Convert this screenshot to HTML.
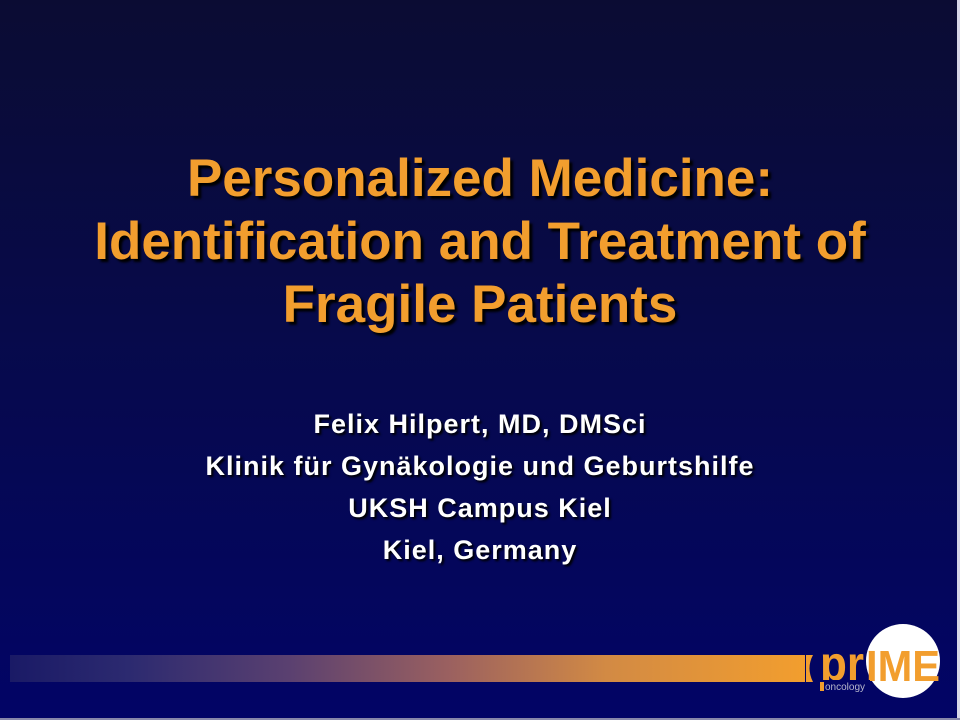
<!DOCTYPE html>
<html><head><meta charset="utf-8"><style>
html,body{margin:0;padding:0}
body{width:960px;height:720px;overflow:hidden;position:relative;background:linear-gradient(180deg,#0b0c33 0%,#070a4a 45%,#020466 100%);font-family:"Liberation Sans",Arial,sans-serif}
.t{position:absolute;left:0;width:960px;text-align:center;font-weight:bold;color:#f29e2e;font-size:53px;line-height:63px;top:147px;text-shadow:3px 3px 2px #000}
.s{position:absolute;left:0;width:960px;text-align:center;font-weight:bold;color:#fff;font-size:27px;letter-spacing:1px;line-height:42px;top:403px;text-shadow:2px 2px 2px #000}
.bar{position:absolute;left:10px;top:655px;width:795px;height:27px;background:linear-gradient(90deg,#1a1a66 0%,#2c2a70 15%,#5a4070 35%,#9a6060 55%,#d28a44 75%,#f29e2e 100%)}
</style></head><body>
<div class="t">Personalized Medicine:<br>Identification and Treatment of<br>Fragile Patients</div>
<div class="s">Felix Hilpert, MD, DMSci<br>Klinik für Gynäkologie und Geburtshilfe<br>UKSH Campus Kiel<br>Kiel, Germany</div>
<div class="bar"></div>
<svg style="position:absolute;left:0;top:0" width="960" height="720">
<path d="M806 655 L813 655 Q806 668 813 682 L806 682 Z" fill="#f29e2e"/>
<circle cx="903" cy="661" r="37" fill="#fff"/>
<text x="820" y="680" font-family="Liberation Sans" font-weight="bold" font-size="48" fill="#f29e2e" textLength="44" lengthAdjust="spacingAndGlyphs">pr</text>
<text x="866" y="681" font-family="Liberation Sans" font-weight="bold" font-size="44" fill="#f29e2e" textLength="74" lengthAdjust="spacingAndGlyphs">IME</text>
<rect x="820" y="680" width="50" height="12" fill="#020466"/>
<rect x="820" y="682" width="4" height="9" fill="#f29e2e"/>
<text x="825" y="690" font-family="Liberation Sans" font-size="10" fill="#b8b8cc">oncology</text>
<rect x="957" y="0" width="3" height="720" fill="#d8d8e8"/>
<rect x="0" y="718" width="960" height="2" fill="#8888aa"/>
</svg>
</body></html>
